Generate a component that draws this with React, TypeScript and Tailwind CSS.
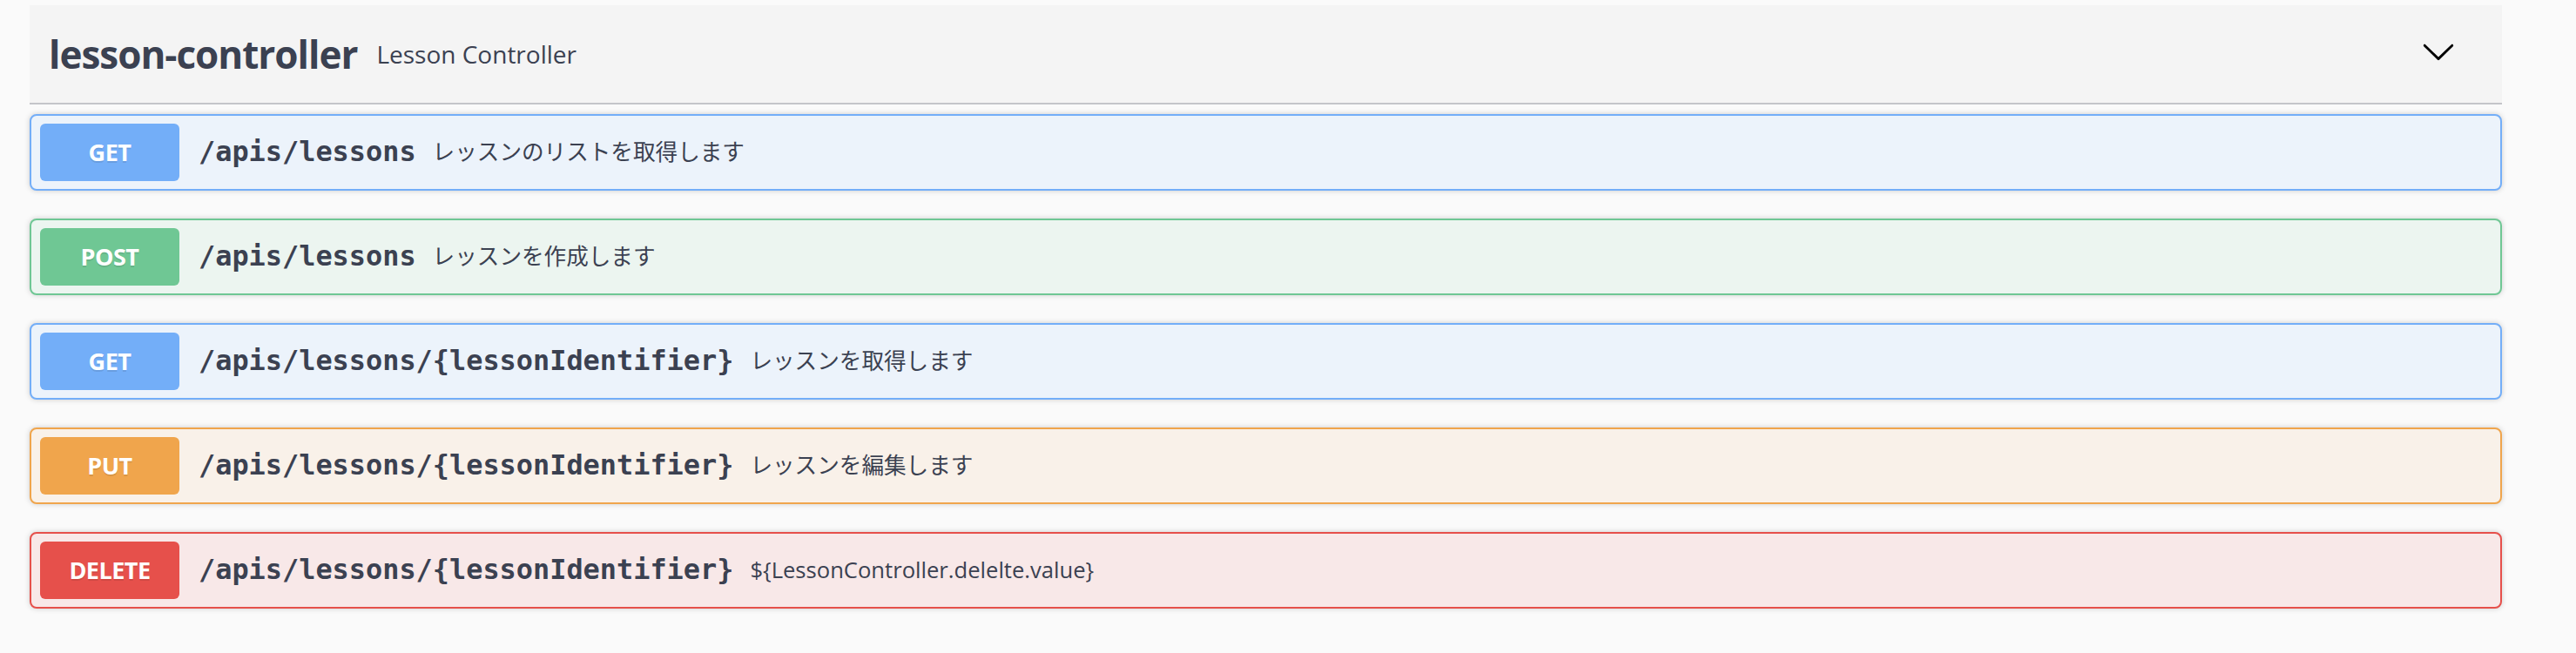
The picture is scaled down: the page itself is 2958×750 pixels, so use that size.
const ops = [
  {
    method: 'GET',
    path: '/apis/lessons',
    desc: 'レッスンのリストを取得します',
    box: 'border-[#73aef8] bg-[#ecf3fb]',
    badge: 'bg-[#73aef8]',
  },
  {
    method: 'POST',
    path: '/apis/lessons',
    desc: 'レッスンを作成します',
    box: 'border-[#6fc794] bg-[#ecf5f0]',
    badge: 'bg-[#6fc794]',
  },
  {
    method: 'GET',
    path: '/apis/lessons/{lessonIdentifier}',
    desc: 'レッスンを取得します',
    box: 'border-[#73aef8] bg-[#ecf3fb]',
    badge: 'bg-[#73aef8]',
  },
  {
    method: 'PUT',
    path: '/apis/lessons/{lessonIdentifier}',
    desc: 'レッスンを編集します',
    box: 'border-[#f0a54c] bg-[#f9f1e9]',
    badge: 'bg-[#f0a54c]',
  },
  {
    method: 'DELETE',
    path: '/apis/lessons/{lessonIdentifier}',
    desc: '${LessonController.delelte.value}',
    box: 'border-[#e6504b] bg-[#f8e8e8]',
    badge: 'bg-[#e6504b]',
  },
];

const sans = 'font-["Open_Sans","Noto_Sans_CJK_JP",sans-serif]';

const Chevron = () => (
  <svg width="40" height="40" viewBox="0 0 20 20" className="shrink-0">
    <path
      fill="#000"
      d="M17.418 6.109c.272-.268.709-.268.979 0s.271.701 0 .969l-7.908 7.83c-.27.268-.707.268-.979 0l-7.908-7.83c-.27-.268-.27-.701 0-.969.271-.268.709-.268.979 0L10 13.25l7.418-7.141z"
    />
  </svg>
);

const App = () => {
  return (
    <div className={`min-h-screen bg-[#fafafa] pt-[6px] text-[#3b4151] ${sans}`}>
      <div className="ml-[34px] w-[2839px]">
        <div className="flex h-[114px] items-center border-b-2 border-[#c4c5c9] bg-[#f4f4f4] pl-[22px] pr-[53px]">
          <h4 className="text-[44px] font-bold tracking-[-1px] leading-none">lesson-controller</h4>
          <span className="ml-[22px] text-[28px] leading-none">Lesson Controller</span>
          <div className="flex-1" />
          <div className="-mt-[6px]">
            <Chevron />
          </div>
        </div>

        <div className="mt-[11px] flex flex-col gap-[32px]">
          {ops.map((op, i) => (
            <div
              key={i}
              className={`flex items-center rounded-[8px] border-2 py-[9px] pl-[10px] shadow-[0_0_6px_rgba(0,0,0,0.19)] ${op.box}`}
            >
              <div
                className={`flex h-[66px] w-[160px] shrink-0 items-center justify-center rounded-[6px] text-[27px] font-bold tracking-[-0.5px] text-white [text-shadow:0_2px_0_rgba(0,0,0,0.1)] ${op.badge}`}
              >
                {op.method}
              </div>
              <span className='pl-[22px] pr-[19px] font-["DejaVu_Sans_Mono",monospace] text-[31.9px] font-bold leading-none'>
                {op.path}
              </span>
              <span className="text-[25.6px] leading-none">{op.desc}</span>
            </div>
          ))}
        </div>
      </div>
    </div>
  );
};

export default App;
